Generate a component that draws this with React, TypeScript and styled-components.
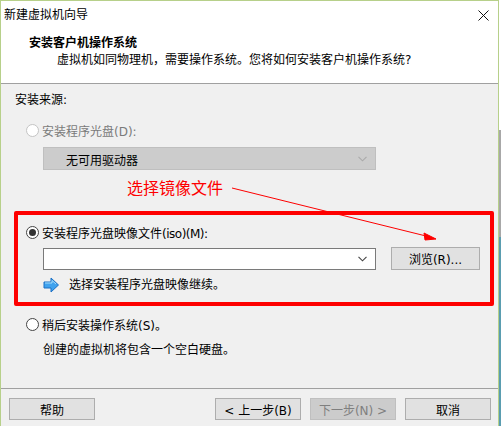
import React from 'react';
import styled, { createGlobalStyle } from 'styled-components';

const Global = createGlobalStyle`
  html, body { margin: 0; padding: 0; background: #fff; }
  #root { width: 501px; height: 426px; overflow: hidden; }
`;

const Screen = styled.div`
  width: 501px;
  height: 426px;
  display: flex;
  background: linear-gradient(#fff 0, #fff 130px, #a8a8a8 130px, #a8a8a8 237px, #5a9db0 237px);
`;

const Dialog = styled.div`
  position: relative;
  box-sizing: border-box;
  width: 499px;
  height: 426px;
  display: flex;
  flex-direction: column;
  border-left: 1px solid #b7d08a;
  border-top: 1px solid #b7d08a;
  border-right: 1px solid #b7d08a;
  font-family: "DejaVu Sans", "Noto Sans CJK SC", "Liberation Sans", sans-serif;
  font-size: 12px;
  color: #000;
  background: #f0f0f0;
`;

const TitleBar = styled.div`
  height: 29px;
  display: flex;
  align-items: center;
  justify-content: space-between;
  padding: 0 9px 0 3px;
  background: #fff;
`;

const TitleText = styled.span`
  font-size: 12px;
  line-height: 17px;
`;

const Header = styled.div`
  height: 53px;
  padding-left: 28px;
  background: #fff;
  border-bottom: 1px solid #a0a0a0;
`;

const HeaderTitle = styled.div`
  font-weight: 700;
  font-size: 12px;
  line-height: 17px;
  margin-top: 5px;
`;

const HeaderSub = styled.div`
  font-size: 12px;
  line-height: 17px;
  padding-left: 28px;
`;

const Body = styled.div`
  flex: 1;
  display: flex;
  flex-direction: column;
  padding: 8px 0 0 13px;
`;

const Label = styled.div`
  line-height: 17px;
  margin-left: 1px;
`;

const RadioRow = styled.label<{ $disabled?: boolean }>`
  display: flex;
  align-items: center;
  gap: 3px;
  height: 17px;
  color: ${p => (p.$disabled ? '#7a7a7a' : '#000')};
`;

const RadioText = styled.span``;

const TightLatin = styled.span`
  letter-spacing: -0.5px;
`;

const Radio = styled.span<{ $checked?: boolean; $disabled?: boolean }>`
  box-sizing: border-box;
  width: 13px;
  height: 13px;
  border-radius: 50%;
  background: #fff;
  border: 1px solid ${p => (p.$disabled ? '#c4c4c4' : '#444')};
  display: flex;
  align-items: center;
  justify-content: center;
  &::after {
    content: '';
    display: ${p => (p.$checked ? 'block' : 'none')};
    width: 7px;
    height: 7px;
    border-radius: 50%;
    background: #333;
  }
`;

const Combo = styled.div<{ $disabled?: boolean }>`
  box-sizing: border-box;
  width: 333px;
  height: ${p => (p.$disabled ? '23px' : '22px')};
  display: flex;
  align-items: center;
  justify-content: space-between;
  padding: ${p => (p.$disabled ? '1px 8px 0 22px' : '0 8px 0 4px')};
  background: ${p => (p.$disabled ? '#cccccc' : '#fff')};
  border: 1px solid ${p => (p.$disabled ? '#bfbfbf' : '#7a7a7a')};
`;

const DiskRadio = styled.div`
  padding-left: 12px;
  margin-top: 13px;
`;

const Indented = styled.div`
  margin-left: 17px;
  margin-top: 8px;
`;

const Highlight = styled.div`
  box-sizing: border-box;
  width: 480px;
  height: 95px;
  margin-top: 41px;
  border: 4px solid #fe0000;
  border-radius: 2px;
  padding: 9px 0 0 8px;
`;

const FileRow = styled.div`
  display: flex;
  align-items: flex-end;
  gap: 15px;
  margin: 6px 0 0 17px;
`;

const Button = styled.button<{ $disabled?: boolean; $wide?: boolean }>`
  box-sizing: border-box;
  width: ${p => (p.$wide ? '89px' : '86px')};
  height: ${p => (p.$wide ? '23px' : '22px')};
  padding: 0;
  background: ${p => (p.$disabled ? '#cccccc' : '#e1e1e1')};
  border: 1px solid ${p => (p.$disabled ? '#bfbfbf' : '#adadad')};
  color: ${p => (p.$disabled ? '#7f7f7f' : '#000')};
  font: inherit;
  font-size: 12px;
`;

const Hint = styled.div`
  display: flex;
  align-items: center;
  gap: 10px;
  margin: 5px 0 0 17px;
  line-height: 17px;
`;

const HintText = styled.span`
  margin-top: 2px;
`;

const LaterBlock = styled.div`
  padding-left: 12px;
  margin-top: 10px;
`;

const LaterNote = styled.div`
  margin: 9px 0 0 17px;
  line-height: 17px;
`;

const Footer = styled.div`
  box-sizing: border-box;
  height: 38px;
  display: flex;
  align-items: flex-start;
  justify-content: space-between;
  padding: 9px 7px 0 8px;
  border-top: 1px solid #a0a0a0;
`;

const NavGroup = styled.div`
  display: flex;
  gap: 9px;
`;

const Annotation = styled.div`
  position: absolute;
  left: 126px;
  top: 177px;
  font-size: 16px;
  line-height: 22px;
  color: #fe0000;
`;

const ArrowLayer = styled.svg`
  position: absolute;
  left: -1px;
  top: -1px;
  pointer-events: none;
`;

const Chevron = ({ color }: { color: string }) => (
  <svg width="9" height="6" viewBox="0 0 9 6">
    <path d="M0.5 0.8 L4.5 4.8 L8.5 0.8" fill="none" stroke={color} strokeWidth="1.1" />
  </svg>
);

const HintArrow = () => (
  <svg width="16" height="16" viewBox="0 0 16 16">
    <path d="M1 5 H8 V1 L15.5 8 L8 15 V11 H1 Z" fill="#3fa2ee" stroke="#1b6fc4" strokeWidth="1" />
    <path d="M2 6 H9 V3.5 L13 7" fill="none" stroke="#a5dcfb" strokeWidth="1" />
  </svg>
);

const CloseIcon = () => (
  <svg width="11" height="11" viewBox="0 0 11 11">
    <path d="M0.5 0.5 L10.5 10.5 M10.5 0.5 L0.5 10.5" stroke="#111" strokeWidth="1" />
  </svg>
);

export default function App() {
  return (
    <Screen>
      <Global />
      <Dialog>
        <TitleBar>
          <TitleText>新建虚拟机向导</TitleText>
          <CloseIcon />
        </TitleBar>
        <Header>
          <HeaderTitle>安装客户机操作系统</HeaderTitle>
          <HeaderSub>虚拟机如同物理机，需要操作系统。您将如何安装客户机操作系统?</HeaderSub>
        </Header>
        <Body>
          <Label>安装来源:</Label>
          <DiskRadio>
            <RadioRow $disabled>
              <Radio $disabled />
              <RadioText>安装程序光盘(D):</RadioText>
            </RadioRow>
            <Indented>
              <Combo $disabled>
                无可用驱动器
                <Chevron color="#aaaaaa" />
              </Combo>
            </Indented>
          </DiskRadio>
          <Highlight>
            <RadioRow>
              <Radio $checked />
              <RadioText>
                安装程序光盘映像文件<TightLatin>(iso)(M):</TightLatin>
              </RadioText>
            </RadioRow>
            <FileRow>
              <Combo>
                <span />
                <Chevron color="#444" />
              </Combo>
              <Button $wide>浏览(R)...</Button>
            </FileRow>
            <Hint>
              <HintArrow />
              <HintText>选择安装程序光盘映像继续。</HintText>
            </Hint>
          </Highlight>
          <LaterBlock>
            <RadioRow>
              <Radio />
              <RadioText>稍后安装操作系统(S)。</RadioText>
            </RadioRow>
            <LaterNote>创建的虚拟机将包含一个空白硬盘。</LaterNote>
          </LaterBlock>
        </Body>
        <Footer>
          <Button>帮助</Button>
          <NavGroup>
            <Button>&lt; 上一步(B)</Button>
            <Button $disabled>下一步(N) &gt;</Button>
            <Button>取消</Button>
          </NavGroup>
        </Footer>
        <Annotation>选择镜像文件</Annotation>
        <ArrowLayer width="501" height="426" viewBox="0 0 501 426">
          <path d="M232 188 L426 236" stroke="#fe0000" strokeWidth="1" fill="none" />
          <path d="M436 239 L424 233 L425 240 Z" fill="#fe0000" stroke="#fe0000" strokeWidth="1" />
        </ArrowLayer>
      </Dialog>
    </Screen>
  );
}
